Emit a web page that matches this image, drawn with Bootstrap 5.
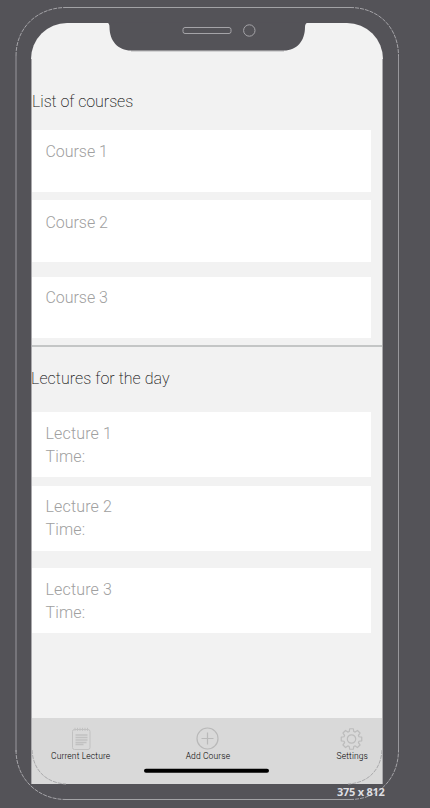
<!DOCTYPE html>
<html lang="en">
<head>
<meta charset="utf-8">
<meta name="viewport" content="width=device-width, initial-scale=1">
<title>Courses</title>
<link href="https://cdn.jsdelivr.net/npm/bootstrap@5.3.0/dist/css/bootstrap.min.css" rel="stylesheet">
<style>
body{background:#545358;font-family:Roboto,"Liberation Sans",sans-serif;font-weight:300;height:808px}
.stage{width:430px;height:808px;padding:23px 0 0 31px}
.screen{width:352px;height:761px;background:#f2f2f2;border-radius:36px 36px 0 0}
.frame{left:0;top:0;pointer-events:none}
.section-title{font-size:16px;line-height:20px;color:#111;font-weight:200;margin:0;white-space:nowrap}
.title-courses{padding:69px 0 0 1px;height:107px;letter-spacing:-.05px}
.title-lectures{padding-top:22px;height:65px;letter-spacing:.05px}
.tile{width:340px;background:#fff;color:#a0a0a0;font-size:16px;padding-left:14.500px}
.course-tile{height:62px;line-height:20px;padding-top:12px;letter-spacing:-.05px}
.course-tile.second{padding-top:13px}
.course-tile.third{height:61px;padding-top:11px}
.lecture-tile{height:65px;line-height:23px;padding-top:9.500px;letter-spacing:.15px}
.gap-a{margin-bottom:8px}.gap-b{margin-bottom:15px}.gap-c{margin-bottom:8.500px}.gap-d{margin-bottom:17.500px}
.divider{height:2px;background:#c4c6c6;margin-top:7px}
.tabs{height:66px;background:#d9d9d9;color:#000;font-size:8.500px;line-height:11px;font-weight:300;padding:9px 15px 0 20px}
.tabs svg{display:block;margin:0 auto 1px}
.tab-item{text-align:center;white-space:nowrap;letter-spacing:.12px}
.tab-item.settings svg{position:relative;left:-1px}
.tab-item.add{margin-right:31px}
.size-label{left:337px;top:785px;color:#dedee1;font:700 11px/14px "Open Sans",sans-serif;letter-spacing:-.25px;white-space:nowrap}
</style>
</head>
<body class="m-0 overflow-hidden">
<div class="stage position-relative">
  <main class="screen d-flex flex-column">
    <h1 class="section-title title-courses">List of courses</h1>
    <div class="tile course-tile gap-a">Course 1</div>
    <div class="tile course-tile second gap-b">Course 2</div>
    <div class="tile course-tile third">Course 3</div>
    <div class="divider"></div>
    <h2 class="section-title title-lectures">Lectures for the day</h2>
    <div class="tile lecture-tile gap-c">Lecture 1<br>Time:</div>
    <div class="tile lecture-tile gap-d">Lecture 2<br>Time:</div>
    <div class="tile lecture-tile">Lecture 3<br>Time:</div>
    <nav class="tabs d-flex justify-content-between mt-auto">
      <div class="tab-item">
        <svg width="22" height="23" viewBox="0 0 22 23" fill="none" stroke="#c1c1c1"><rect x="2.500" y="2.500" width="17.500" height="20" rx="2"/><path d="M5 .8v3M7.500 .8v3M10 .8v3M12.500 .8v3M15 .8v3M17.500 .8v3"/><path d="M5.500 8h12M5.500 10.500h12M5.500 13h12M5.500 15.500h11M5.500 17.500h8" stroke-width="1.600"/></svg>
        Current Lecture</div>
      <div class="tab-item add">
        <svg width="23" height="23" viewBox="0 0 23 23" fill="none" stroke="#b9b9b9" stroke-width="1.200"><circle cx="11.500" cy="11.500" r="10.500"/><path d="M11.500 5.500v12M5.500 11.500h12"/></svg>
        Add Course</div>
      <div class="tab-item settings">
        <svg width="23" height="23" viewBox="-11.500 -12 23 23" fill="none" stroke="#bcbcbc" stroke-width="1.200" stroke-linejoin="round"><circle r="4.200"/><path id="gear"/></svg>
        Settings</div>
    </nav>
  </main>
  <svg class="frame position-absolute" width="430" height="808" fill="none">
    <path d="M107 22.500Q109.500 23 109.500 27C109.500 41 118 50.500 131 50.500H284C297 50.500 305 41 305 27Q305 23 308 22.500Z" fill="#545358"/>
    <path d="M131 50.800H284" stroke="#8b8a8e"/>
    <path d="M66 7.500H350" stroke="#a2a2a5"/>
    <path d="M16 56V752M398.500 56V752" stroke="#98979c"/>
    <path d="M66 799.500H350" stroke="#a2a2a5"/>
    <path d="M16 56C16 27 38 7.500 66 7.500M350 7.500C378 7.500 398.500 27 398.500 56M16 750C16 779 38 799.500 66 799.500M350 799.500C378 799.500 398.500 779 398.500 750" stroke="#a5a4a8" stroke-dasharray="4 1"/>
    <path d="M31.500 59V784M382.500 59V784" stroke="#aaa9ac"/>
    <path d="M32 750C33 770 46 783 66 784M382 750C381 770 368 783 348 784" stroke="#aaaaac" stroke-dasharray="4 1"/>
    <rect x="183" y="27.500" width="48" height="6" rx="2" stroke="#a5a4a8"/>
    <circle cx="249.300" cy="30.500" r="5.700" stroke="#a5a4a8"/>
    <path d="M146 770.800H267" stroke="#000" stroke-width="4" stroke-linecap="round"/>
  </svg>
  <div class="size-label position-absolute">375 x 812</div>
</div>
<script>
// Eight-tooth gear outline
(function(){
  var d='';
  for(var i=0;i<8;i++){
    [[-17,7.800],[-10,10.400],[10,10.400],[17,7.800]].forEach(function(p,j){
      var a=(i*45+p[0])*Math.PI/180;
      d+=(i||j?'L':'M')+(p[1]*Math.sin(a)).toFixed(2)+' '+(-p[1]*Math.cos(a)).toFixed(2);
    });
  }
  document.getElementById('gear').setAttribute('d',d+'Z');
})();
</script>
<script src="https://cdn.jsdelivr.net/npm/bootstrap@5.3.0/dist/js/bootstrap.bundle.min.js"></script>
</body>
</html>
